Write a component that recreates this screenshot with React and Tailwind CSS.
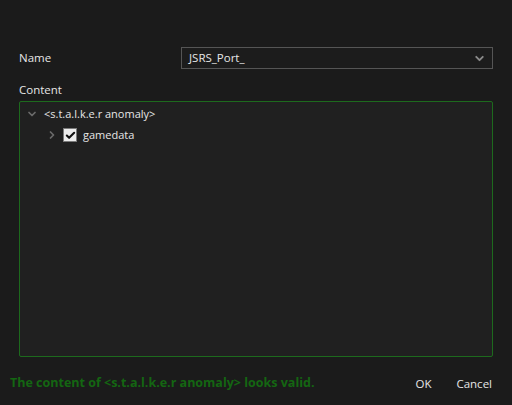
import { ChevronDown, ChevronRight, Check } from "lucide-react";

export default function App() {
  return (
    <div className="w-[512px] h-[405px] bg-[#1b1b1b] text-[#e6e6e6] text-[11px] font-['Open_Sans',sans-serif] flex flex-col">
      <div className="flex flex-col px-[19px] pt-[47px] flex-1">
        <div className="flex items-center h-[22px]">
          <span className="w-[162px] text-[11.5px]">Name</span>
          <div className="flex-1 h-[22px] border border-[#555] bg-[#1c1c1c] flex items-center pl-[7px] pr-[6px]">
            <span className="flex-1 text-[11.5px]">JSRS_Port_</span>
            <ChevronDown size={13} strokeWidth={3.5} className="text-[#8a8a8a]" />
          </div>
        </div>
        <div className="mt-[11px] h-[20px] flex items-center text-[11.5px]">Content</div>
        <div className="mt-[1px] h-[256px] border border-[#1d6a1d] rounded-[2px] bg-[#202020] pt-[3px]">
          <div className="flex items-center h-[18px] pl-[6px]">
            <ChevronDown size={12} strokeWidth={3.5} className="text-[#6a6a6a]" />
            <span className="ml-[6px]">&lt;s.t.a.l.k.e.r anomaly&gt;</span>
          </div>
          <div className="flex items-center h-[24px] pl-[26px]">
            <ChevronRight size={12} strokeWidth={3.5} className="text-[#6a6a6a]" />
            <div className="ml-[5px] w-[14px] h-[14px] border border-[#7a7a7a] bg-[#ececec] flex items-center justify-center">
              <Check size={11} strokeWidth={4.5} className="text-[#111]" />
            </div>
            <span className="ml-[6px]">gamedata</span>
          </div>
        </div>
      </div>
      <div className="h-[49px] flex items-center pl-[10px] pr-[20px] pt-[5px]">
        <span className="flex-1 font-bold text-[12.5px] text-[#146612]">
          The content of &lt;s.t.a.l.k.e.r anomaly&gt; looks valid.
        </span>
        <span className="mr-[25px] text-[11.5px]">OK</span>
        <span className="text-[11.5px]">Cancel</span>
      </div>
    </div>
  );
}
